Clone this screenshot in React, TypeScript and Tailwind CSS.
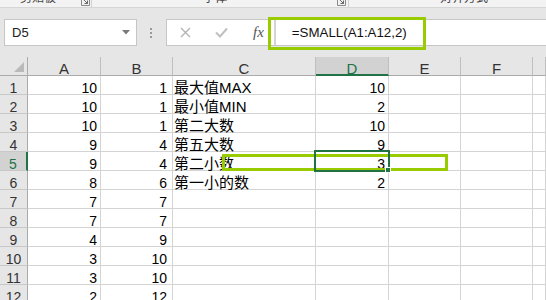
import React from "react";

const colA = [10, 10, 10, 9, 9, 8, 7, 7, 4, 3, 3, 2];
const colB = [1, 1, 1, 4, 4, 6, 7, 7, 9, 10, 10, 12];
const colC = ["最大值MAX", "最小值MIN", "第二大数", "第五大数", "第二小数", "第一小的数"];
const colD = [10, 2, 10, 9, 3, 2];
const letters = ["A", "B", "C", "D", "E", "F", ""];

function Launcher() {
  return (
    <svg width="9" height="9" viewBox="0 0 9 9" className="mt-[-3px]">
      <path d="M0.5 0.5h8v8h-8z" fill="none" stroke="#8a8a8a" strokeWidth="1" />
      <path d="M2.5 2.5l4 4M3.5 6.5h3v-3" fill="none" stroke="#666" strokeWidth="1" />
    </svg>
  );
}

function Ribbon() {
  return (
    <div className="flex h-[8px] overflow-hidden border-b border-[#d6d6d6] bg-[#f3f3f3] text-[12px] leading-[12px] text-[#444]">
      <div className="flex w-[92px] shrink-0 items-start border-r border-[#d0d0d0]">
        <span className="ml-[20px] mt-[-8px]">剪贴板</span>
        <span className="ml-[25px]"><Launcher /></span>
      </div>
      <div className="flex w-[257px] shrink-0 items-start border-r border-[#d0d0d0]">
        <span className="ml-[111px] mt-[-8px]">字体</span>
        <span className="ml-[110px]"><Launcher /></span>
      </div>
      <div className="flex items-start">
        <span className="ml-[91px] mt-[-8px]">对齐方式</span>
      </div>
    </div>
  );
}

function FormulaBar() {
  return (
    <div className="relative flex h-[49px] items-start bg-[#e6e6e6] pl-[4px] pt-[11px]">
      <div className="flex h-[27px] w-[133px] items-center justify-between border border-[#c6c6c6] bg-white pl-[7px] pr-[6px]">
        <span className="text-[13px] text-[#222]">D5</span>
        <svg width="8" height="5" viewBox="0 0 8 5">
          <path d="M0 0h8L4 4.5z" fill="#7a7a7a" />
        </svg>
      </div>
      <div className="ml-[13px] mt-[9px] flex w-[3px] flex-col gap-[2px]">
        <span className="h-[2px] w-[2px] bg-[#9a9a9a]" />
        <span className="h-[2px] w-[2px] bg-[#9a9a9a]" />
        <span className="h-[2px] w-[2px] bg-[#9a9a9a]" />
      </div>
      <div className="ml-[13px] flex h-[27px] flex-1 items-center border-y border-l border-[#c6c6c6] bg-white">
        <svg width="11" height="11" viewBox="0 0 11 11" className="ml-[13px]">
          <path d="M1 1l9 9M10 1l-9 9" stroke="#b4b4b4" strokeWidth="1.4" />
        </svg>
        <svg width="13" height="11" viewBox="0 0 13 11" className="ml-[24px]">
          <path d="M1 5.5l4 4 7-8" fill="none" stroke="#c0c0c0" strokeWidth="2" />
        </svg>
        <span className="ml-[25px] font-['Liberation_Serif',serif] text-[15px] italic text-[#555]">fx</span>
        <span className="ml-[10px] h-[25px] w-[2px] bg-[#d4d4d4]" />
        <span className="ml-[16px] text-[13.3px] text-[#111]">=SMALL(A1:A12,2)</span>
      </div>
      <div className="absolute left-[268px] top-[9px] h-[33px] w-[158px] border-[3px] border-[#99cc00]" />
    </div>
  );
}

function Sheet() {
  const cell = "h-[19px] border-b border-r border-[#d4d4d4] pt-[3px] leading-[18px] whitespace-nowrap";
  return (
    <div className="relative grid grid-cols-[28px_73px_72px_143px_73px_72px_72px_1fr]">
      <div className="flex h-[19px] items-end justify-end border-b border-r border-[#ababab] bg-[#e6e6e6] pb-[3px] pr-[3px]">
        <svg width="10" height="10" viewBox="0 0 10 10">
          <path d="M10 0v10H0z" fill="#b9b9b9" />
        </svg>
      </div>
      {letters.map((l) =>
        l === "D" ? (
          <div
            key={l}
            className="h-[19px] border-b-2 border-r border-b-[#217346] border-r-[#bfbfbf] bg-[#d2d2d2] pt-[3px] text-center text-[15px] leading-[18px] text-[#217346]"
          >
            {l}
          </div>
        ) : (
          <div
            key={l || "g"}
            className="h-[19px] border-b border-r border-b-[#ababab] border-r-[#bfbfbf] bg-[#e6e6e6] pt-[3px] text-center text-[15px] leading-[18px] text-[#333]"
          >
            {l}
          </div>
        )
      )}
      {colA.map((a, i) => (
        <React.Fragment key={i}>
          {i === 4 ? (
            <div className="h-[19px] border-b border-r-2 border-b-[#c8c8c8] border-r-[#217346] bg-[#d2d2d2] pt-[3px] text-center text-[14px] leading-[18px] text-[#217346]">
              {i + 1}
            </div>
          ) : (
            <div className="h-[19px] border-b border-r border-b-[#c8c8c8] border-r-[#ababab] bg-[#e6e6e6] pt-[3px] text-center text-[14px] leading-[18px] text-[#333]">
              {i + 1}
            </div>
          )}
          <div className={`${cell} pr-[3px] text-right text-[14px] text-black`}>{a}</div>
          <div className={`${cell} pr-[5px] text-right text-[14px] text-black`}>{colB[i]}</div>
          <div className={`${cell} pl-[1px] text-[15px] text-black`}>{colC[i] ?? ""}</div>
          <div className={`${cell} pr-[3px] text-right text-[14px] text-black`}>{colD[i] ?? ""}</div>
          <div className={cell} />
          <div className={cell} />
          <div className={cell} />
        </React.Fragment>
      ))}
      <div className="absolute left-[222px] top-[97px] h-[17px] w-[226px] border-[3px] border-[#99cc00]" />
      <div className="absolute left-[314px] top-[93px] h-[22px] w-[76px] border-2 border-[#217346]" />
      <div className="absolute left-[385px] top-[110px] h-[6px] w-[6px] border border-white bg-[#217346]" />
    </div>
  );
}

export default function App() {
  return (
    <div className="h-[300px] w-[546px] overflow-hidden bg-white font-['Liberation_Sans','Noto_Sans_CJK_SC',sans-serif]">
      <Ribbon />
      <FormulaBar />
      <Sheet />
    </div>
  );
}
